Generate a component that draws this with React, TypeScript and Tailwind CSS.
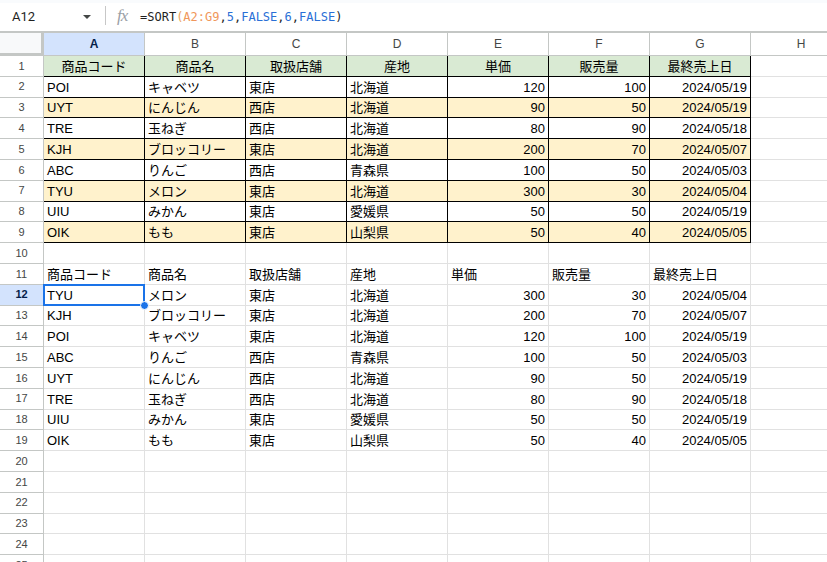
import React from 'react';

const COLS = ['A', 'B', 'C', 'D', 'E', 'F', 'G', 'H'];

const HEADER = ['商品コード', '商品名', '取扱店舗', '産地', '単価', '販売量', '最終売上日'];

const SOURCE: string[][] = [
    ['POI', 'キャベツ', '東店', '北海道', '120', '100', '2024/05/19'],
    ['UYT', 'にんじん', '西店', '北海道', '90', '50', '2024/05/19'],
    ['TRE', '玉ねぎ', '西店', '北海道', '80', '90', '2024/05/18'],
    ['KJH', 'ブロッコリー', '東店', '北海道', '200', '70', '2024/05/07'],
    ['ABC', 'りんご', '西店', '青森県', '100', '50', '2024/05/03'],
    ['TYU', 'メロン', '東店', '北海道', '300', '30', '2024/05/04'],
    ['UIU', 'みかん', '東店', '愛媛県', '50', '50', '2024/05/19'],
    ['OIK', 'もも', '東店', '山梨県', '50', '40', '2024/05/05'],
];

// result of SORT(A2:G9,5,FALSE,6,FALSE)
const SORTED: string[][] = [
    ['TYU', 'メロン', '東店', '北海道', '300', '30', '2024/05/04'],
    ['KJH', 'ブロッコリー', '東店', '北海道', '200', '70', '2024/05/07'],
    ['POI', 'キャベツ', '東店', '北海道', '120', '100', '2024/05/19'],
    ['ABC', 'りんご', '西店', '青森県', '100', '50', '2024/05/03'],
    ['UYT', 'にんじん', '西店', '北海道', '90', '50', '2024/05/19'],
    ['TRE', '玉ねぎ', '西店', '北海道', '80', '90', '2024/05/18'],
    ['UIU', 'みかん', '東店', '愛媛県', '50', '50', '2024/05/19'],
    ['OIK', 'もも', '東店', '山梨県', '50', '40', '2024/05/05'],
];

const TOTAL_ROWS = 26;

function cellValue(row: number, col: number): string {
    if (col > 6) return '';
    if (row === 1 || row === 11) return HEADER[col];
    if (row >= 2 && row <= 9) return SOURCE[row - 2][col];
    if (row >= 12 && row <= 19) return SORTED[row - 12][col];
    return '';
}

function FormulaBar() {
    return (
        <div className="h-[33px] shrink-0 bg-white border-b-2 border-[#c4c7c5] flex items-center relative">
            <div className="absolute top-0 left-0 right-0 h-[3px] bg-[#f9fbfd]" />
            <div className="w-[105px] flex items-center pl-[12px] pr-[14px] pt-[2px]">
                <span className="text-[13px] text-[#1f1f1f] font-['Roboto',sans-serif]">A12</span>
                <span className="ml-auto w-0 h-0 border-l-[4px] border-r-[4px] border-t-[4px] border-l-transparent border-r-transparent border-t-[#444746]" />
            </div>
            <div className="w-px h-[19px] bg-[#c7c7c7]" />
            <div className="w-[34px] pl-[11px] pt-[1px]">
                <span className="text-[17px] italic text-[#9aa0a6] font-['Liberation_Serif',serif] tracking-[-1px]">
                    fx
                </span>
            </div>
            <div className="pt-[2px] text-[12px] font-['DejaVu_Sans_Mono',monospace] text-[#1f1f1f] whitespace-pre">
                <span>=SORT</span>
                <span className="text-[#e8a35c]">(</span>
                <span className="text-[#f0975b]">A2:G9</span>
                <span>,</span>
                <span className="text-[#2a6fd6]">5</span>
                <span>,</span>
                <span className="text-[#2a6fd6]">FALSE</span>
                <span>,</span>
                <span className="text-[#2a6fd6]">6</span>
                <span>,</span>
                <span className="text-[#2a6fd6]">FALSE</span>
                <span className="text-[#1f1f1f]">)</span>
            </div>
        </div>
    );
}

function ColumnHeaders() {
    return (
        <div className="flex h-[23px] shrink-0">
            <div className="w-[44px] shrink-0 bg-[#f8f9fa] border-r-[3px] border-b-[3px] border-[#c4c7c5]" />
            {COLS.map((c) => (
                <div
                    key={c}
                    className={`w-[101px] shrink-0 flex items-center justify-center border-r border-b border-[#c4c7c5] text-[12px] font-['Liberation_Sans',sans-serif] ${
                        c === 'A' ? 'bg-[#d3e3fd] text-[#041e49] font-bold' : 'bg-white text-[#444746]'
                    }`}
                >
                    {c}
                </div>
            ))}
        </div>
    );
}

function GridRow({ row }: { row: number }) {
    const selectedRow = row === 12;
    const inTable = row >= 1 && row <= 9;
    const rowBg = row === 1 ? 'bg-[#d9ead3]' : inTable && row % 2 === 1 ? 'bg-[#fff2cc]' : 'bg-white';

    return (
        <div className="flex h-[20.8px] shrink-0">
            <div
                className={`w-[44px] shrink-0 flex items-center justify-center border-r border-b border-[#c4c7c5] text-[11px] font-['Liberation_Sans',sans-serif] ${
                    selectedRow ? 'bg-[#d3e3fd] text-[#041e49] font-bold' : 'bg-white text-[#444746]'
                }`}
            >
                {row}
            </div>
            {COLS.map((_, col) => {
                const value = cellValue(row, col);
                const tableCell = inTable && col <= 6;
                const numeric = col >= 4 && col <= 6 && row !== 1 && row !== 11;
                const align = row === 1 ? 'justify-center' : numeric ? 'justify-end' : 'justify-start';
                const border = tableCell ? 'border-black' : 'border-[#e1e1e1]';
                const bg = tableCell ? rowBg : 'bg-white';
                const isActive = row === 12 && col === 0;

                return (
                    <div
                        key={col}
                        className={`relative w-[101px] shrink-0 flex items-end pb-[1px] px-[3px] border-r border-b text-[13px] leading-[17px] text-black font-['Liberation_Sans','Noto_Sans_CJK_JP',sans-serif] whitespace-nowrap overflow-visible ${align} ${border} ${bg}`}
                    >
                        {value}
                        {isActive && (
                            <>
                                <div className="absolute -left-px -top-px w-[102px] h-[22px] border-2 border-[#1a73e8] pointer-events-none" />
                                <div className="absolute -right-[5px] -bottom-[5px] w-[9px] h-[9px] rounded-full bg-[#1a73e8] border border-white z-10" />
                            </>
                        )}
                    </div>
                );
            })}
        </div>
    );
}

export default function App() {
    const rows = Array.from({ length: TOTAL_ROWS }, (_, i) => i + 1);
    return (
        <div className="w-[827px] h-[562px] overflow-hidden bg-white flex flex-col">
            <FormulaBar />
            <ColumnHeaders />
            {rows.map((r) => (
                <GridRow key={r} row={r} />
            ))}
        </div>
    );
}
